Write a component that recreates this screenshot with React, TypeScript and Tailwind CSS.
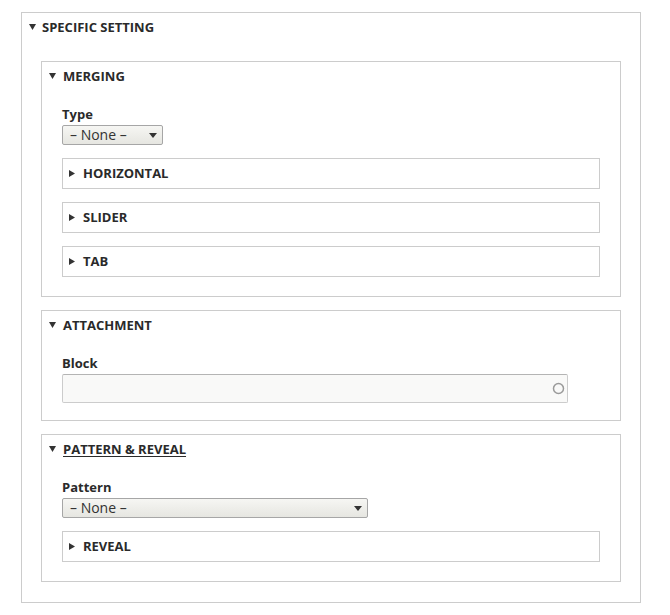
import React from "react";

const DownTri = () => (
  <svg width="7" height="6" viewBox="0 0 7 6" className="shrink-0">
    <path d="M0 0 L7 0 L3.5 6 Z" fill="#333" />
  </svg>
);

const RightTri = () => (
  <svg width="6" height="7" viewBox="0 0 6 7" className="shrink-0">
    <path d="M0 0 L6 3.5 L0 7 Z" fill="#333" />
  </svg>
);

const Collapsed = ({ label }: { label: string }) => (
  <div className="h-[31px] w-[538px] border border-[#ccc] flex items-center pl-[6px] pb-[1px]">
    <RightTri />
    <span className="ml-[8px] text-[13px] font-bold text-[#2a2a2a] leading-[18px]">{label}</span>
  </div>
);

const Select = ({ w }: { w: string }) => (
  <div
    className={`${w} h-[20px] mt-[2px] border border-[#a6a6a6] rounded-[2px] bg-gradient-to-b from-[#f6f6f3] to-[#e6e6e1] flex items-center justify-between pl-[7px] pr-[5px]`}
  >
    <span className="text-[14px] text-[#333] leading-[18px]">– None –</span>
    <svg width="8" height="5" viewBox="0 0 8 5">
      <path d="M0 0 L8 0 L4 5 Z" fill="#333" />
    </svg>
  </div>
);

const Label = ({ text }: { text: string }) => (
  <div className="text-[13px] font-bold text-[#2a2a2a] leading-[18px]">{text}</div>
);

const Fieldset = ({
  title,
  underline,
  children,
  pb,
}: {
  title: string;
  underline?: boolean;
  children: React.ReactNode;
  pb: string;
}) => (
  <div className="border border-[#ccc] w-[580px]">
    <div className="h-[28px] flex items-center pl-[7px]">
      <DownTri />
      <span
        className={`ml-[7px] text-[13px] font-bold text-[#2a2a2a] leading-[18px] ${underline ? "underline underline-offset-2" : ""}`}
      >
        {title}
      </span>
    </div>
    <div className={`pl-[20px] pt-[15px] ${pb}`}>{children}</div>
  </div>
);

export default function App() {
  return (
    <div
      className="w-[670px] h-[615px] bg-white pt-[12px] pl-[21px]"
      style={{ fontFamily: '"Open Sans", "Liberation Sans", sans-serif' }}
    >
      <div className="border border-[#ccc] w-[620px] h-[591px]">
        <div className="h-[28px] flex items-center pl-[7px]">
          <DownTri />
          <span className="ml-[6px] text-[13px] font-bold text-[#2a2a2a] leading-[18px]">SPECIFIC SETTING</span>
        </div>
        <div className="pl-[19px] pt-[20px] flex flex-col gap-[13px]">
          <Fieldset title="MERGING" pb="pb-[19px]">
            <Label text="Type" />
            <Select w="w-[101px]" />
            <div className="mt-[13px] flex flex-col gap-[13px]">
              <Collapsed label="HORIZONTAL" />
              <Collapsed label="SLIDER" />
              <Collapsed label="TAB" />
            </div>
          </Fieldset>
          <Fieldset title="ATTACHMENT" pb="pb-[17px]">
            <Label text="Block" />
            <div className="mt-[2px] w-[506px] h-[29px] border border-[#ccc] border-t-[#b4b4b4] rounded-[2px] bg-[#f9f9f8] flex items-center justify-end pr-[2px]">
              <svg width="13" height="13" viewBox="0 0 13 13">
                <circle cx="6.5" cy="6.5" r="5" fill="none" stroke="#9a9a9a" strokeWidth="1.5" />
              </svg>
            </div>
          </Fieldset>
          <Fieldset title="PATTERN & REVEAL" underline pb="pb-[19px]">
            <Label text="Pattern" />
            <Select w="w-[306px]" />
            <div className="mt-[13px]">
              <Collapsed label="REVEAL" />
            </div>
          </Fieldset>
        </div>
      </div>
    </div>
  );
}
